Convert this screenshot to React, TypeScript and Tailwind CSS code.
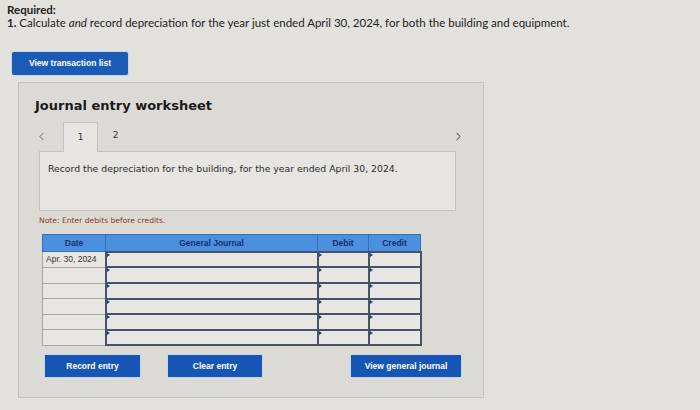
import React from 'react';
import { ChevronLeft, ChevronRight } from 'lucide-react';

const rows = ['Apr. 30, 2024', '', '', '', '', ''];

function Marker() {
  return <span className="absolute left-0 top-0 w-0 h-0 border-t-[2px] border-b-[2px] border-l-[3px] border-t-transparent border-b-transparent border-l-[#23408a]" />;
}

export default function App() {
  return (
    <div className="w-[700px] h-[410px] bg-[#e3e1dc] overflow-hidden px-[7px] pt-[3px] font-['Lato',sans-serif] text-[#222]">
      <div className="text-[11.5px] font-bold leading-[13px]">Required:</div>
      <div className="text-[11.5px] leading-[14px]">
        <span className="font-bold">1.</span> Calculate <i>and</i> record depreciation for the year just ended April 30, 2024, for both the building and equipment.
      </div>

      <button className="mt-[22px] ml-[5px] w-[116px] h-[23px] bg-[#1b5bb5] rounded-[2px] text-white text-[8.5px] font-bold font-['Liberation_Sans',sans-serif] shadow-[0_0_0_1px_#c9d6ea]">
        View transaction list
      </button>

      <div className="mt-[7px] ml-[11px] w-[466px] h-[316px] bg-[#dcdad5] border border-[#c6c4bf] font-['DejaVu_Sans',sans-serif]">
        <h2 className="pl-[16px] pt-[14px] text-[13px] font-bold text-[#1a1a1a] leading-[18px]">Journal entry worksheet</h2>

        <div className="mt-[6px] ml-[20px] w-[417px] flex items-end h-[30px] relative">
          <span className="w-[24px] self-center flex justify-start pt-[1px] text-[#666]"><ChevronLeft className="w-[13px] h-[13px] -ml-[4px]" strokeWidth={1.8} /></span>
          <div className="w-[35px] h-[30px] bg-[#e7e5e1] border border-b-0 border-[#c4c2bd] flex items-center justify-center text-[9px] text-[#333] relative z-10 -mb-px">1</div>
          <div className="w-[35px] h-[30px] flex items-center justify-center text-[9px] text-[#333]">2</div>
          <span className="ml-auto mr-[-9px] self-center pt-[1px] text-[#333]"><ChevronRight className="w-[13px] h-[13px]" strokeWidth={1.8} /></span>
        </div>
        <div className="ml-[20px] w-[417px] h-[60px] bg-[#e7e5e1] border border-[#c4c2bd] pl-[8px] pt-[10px] text-[9.3px] text-[#2a2a2a]">
          Record the depreciation for the building, for the year ended April 30, 2024.
        </div>

        <div className="ml-[20px] mt-[4px] text-[7.6px] text-[#8a3b2e]">Note: Enter debits before credits.</div>

        <table className="ml-[23px] mt-[8px] w-[378px] border-collapse font-['Liberation_Sans',sans-serif] table-fixed">
          <thead>
            <tr className="h-[17px] bg-[#4a8fe0] text-[#16306b] text-[8.5px] font-bold">
              <th className="w-[63px] border border-[#3a6fb8] font-bold">Date</th>
              <th className="w-[212px] border border-[#3a6fb8] font-bold">General Journal</th>
              <th className="w-[51px] border border-[#3a6fb8] font-bold">Debit</th>
              <th className="w-[52px] border border-[#3a6fb8] font-bold">Credit</th>
            </tr>
          </thead>
          <tbody>
            {rows.map((d, i) => (
              <tr key={i} className="h-[15.6px] bg-[#e8e6e2]">
                <td className="border border-[#a9a7a3] text-[8.5px] text-[#333] pl-[3px] leading-[13px]">{d}</td>
                <td className="relative border-x-2 border-y-2 border-[#4a5266]"><Marker /></td>
                <td className="relative border-x-2 border-y-2 border-[#4a5266]"><Marker /></td>
                <td className="relative border-x-2 border-y-2 border-[#4a5266]"><Marker /></td>
              </tr>
            ))}
          </tbody>
        </table>

        <div className="mt-[9px] ml-[26px] flex items-center font-['Liberation_Sans',sans-serif] text-[8.5px] font-bold text-white">
          <button className="w-[95px] h-[22px] bg-[#1655b5] shadow-[0_0_0_1px_#c9d6ea]">Record entry</button>
          <button className="ml-[28px] w-[94px] h-[22px] bg-[#1655b5] shadow-[0_0_0_1px_#c9d6ea]">Clear entry</button>
          <button className="ml-[89px] w-[110px] h-[22px] bg-[#1655b5] shadow-[0_0_0_1px_#c9d6ea]">View general journal</button>
        </div>
      </div>
    </div>
  );
}
